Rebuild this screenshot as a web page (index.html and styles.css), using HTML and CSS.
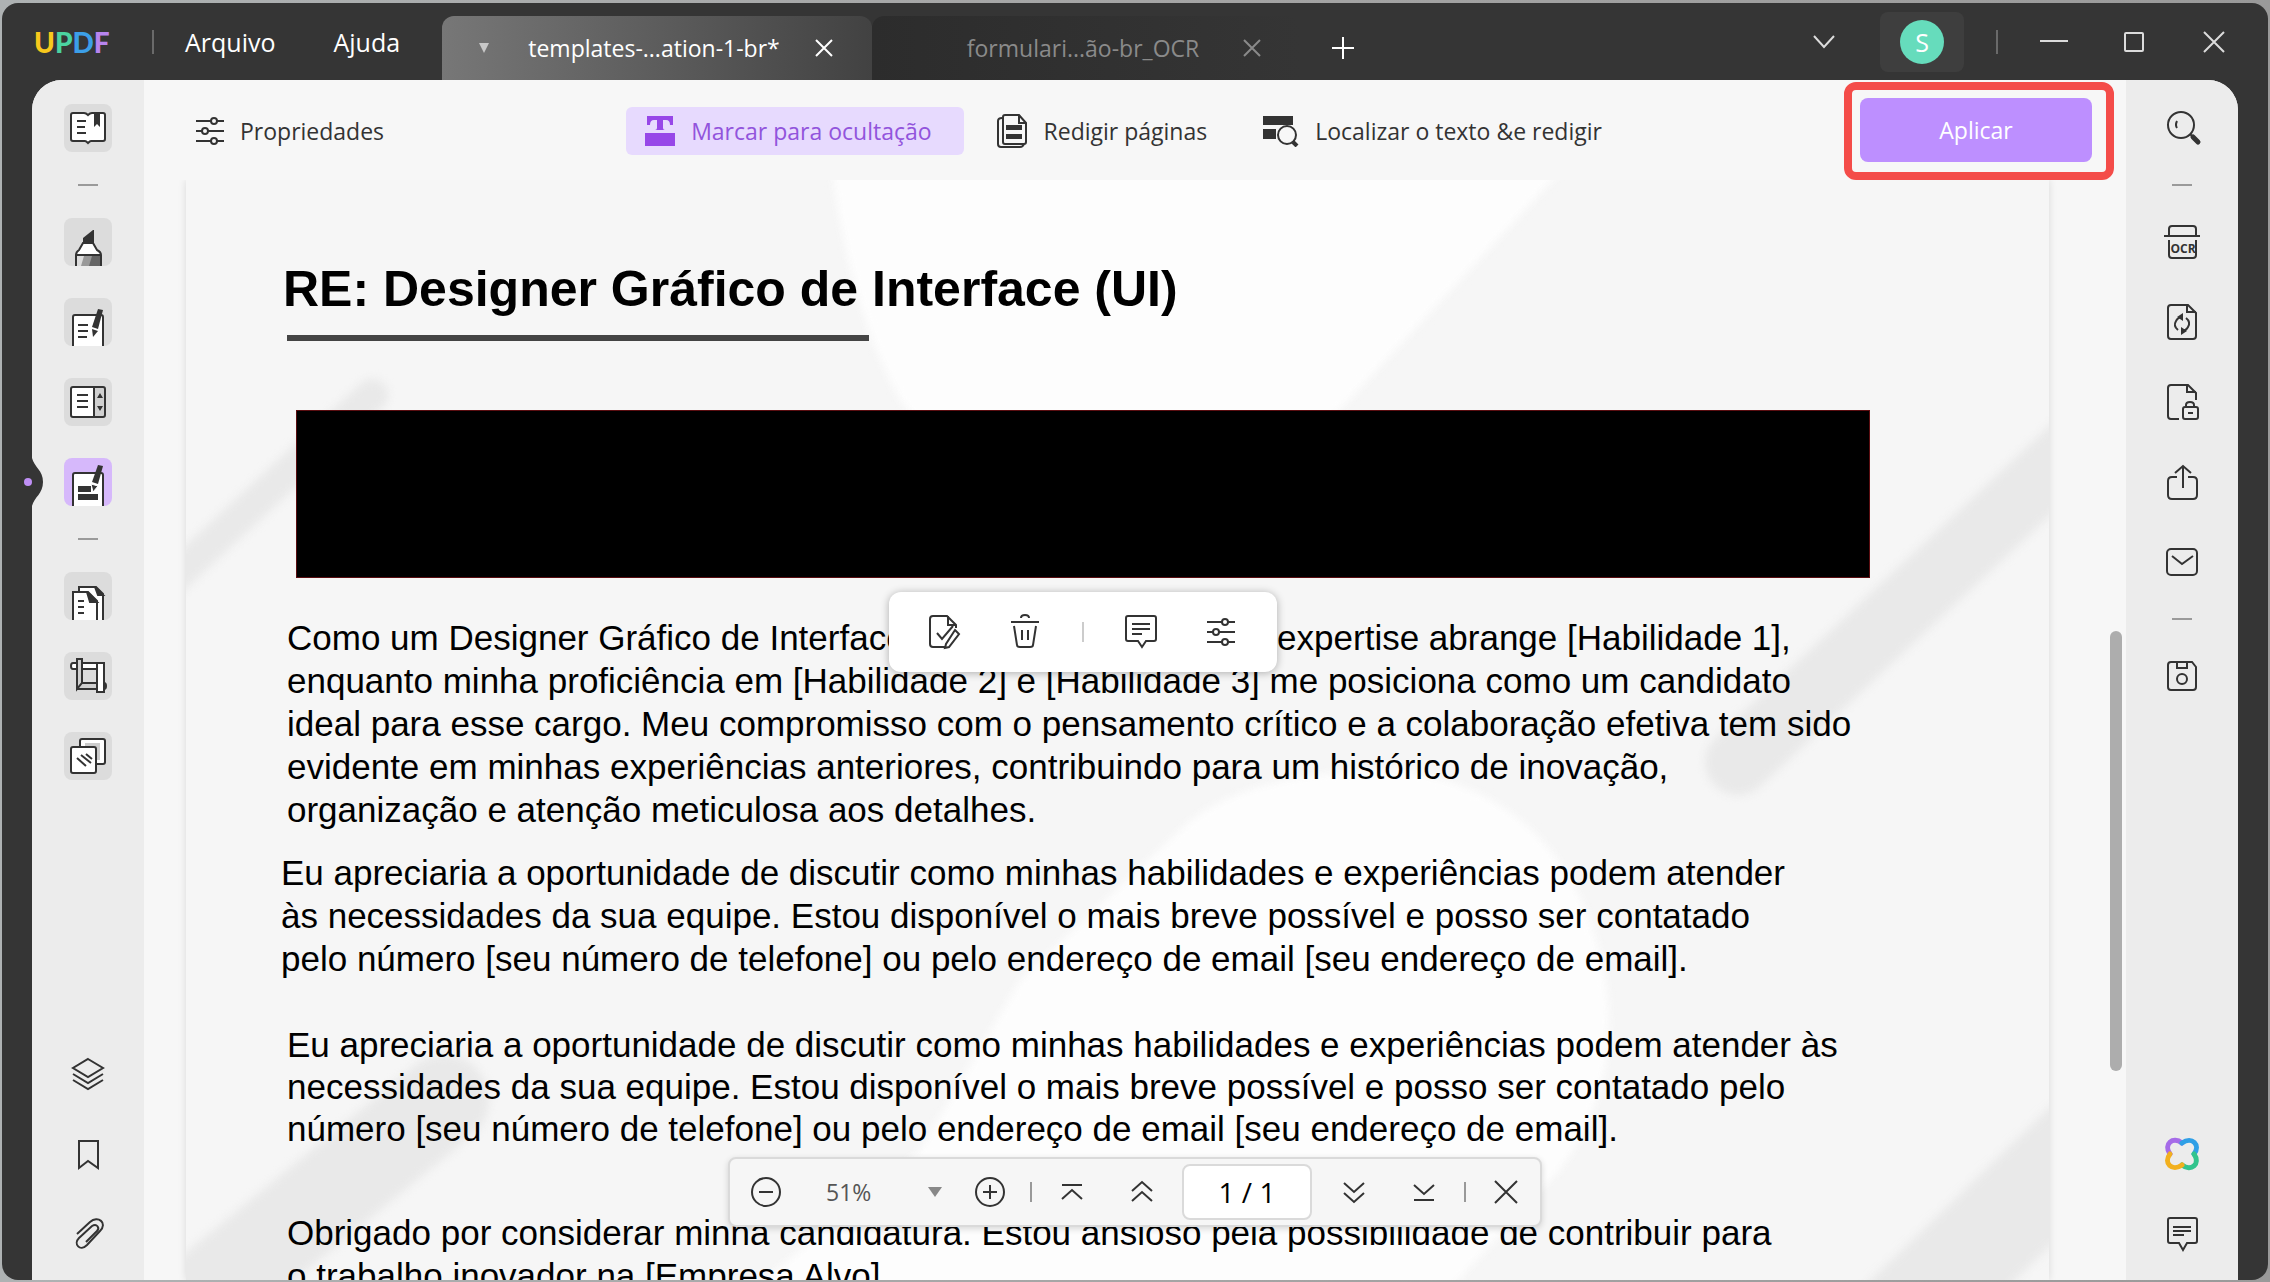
FILE: index.html
```html
<!DOCTYPE html>
<html lang="pt-BR">
<head>
    <meta charset="UTF-8">
    <meta name="viewport" content="width=device-width, initial-scale=1.0">
    <title>UPDF</title>
    <link rel="stylesheet" href="styles.css">
</head>
<body>
    <div class="window">
        <!-- Title bar -->
        <header class="titlebar">
            <div class="logo"><span class="logo-u">U</span><span class="logo-p">P</span><span class="logo-d">D</span><span class="logo-f">F</span></div>
            <span class="bar-divider"></span>
            <nav class="menu">
                <button class="menu-btn">Arquivo</button>
                <button class="menu-btn">Ajuda</button>
            </nav>
            <div class="tabs">
                <div class="tab tab-active">
                    <button class="tab-icon" aria-label="Opções da guia"><svg class="solid" width="12" height="10" viewBox="0 0 12 10"><path d="M1 0h10L6 10z"/></svg></button>
                    <button class="tab-label">templates-...ation-1-br*</button>
                    <button class="tab-icon" aria-label="Fechar guia"><svg width="18" height="18" viewBox="0 0 18 18"><path d="M1 1l16 16M17 1L1 17"/></svg></button>
                </div>
                <div class="tab">
                    <span class="tab-icon"></span>
                    <button class="tab-label">formulari...ão-br_OCR</button>
                    <button class="tab-icon" aria-label="Fechar guia"><svg width="18" height="18" viewBox="0 0 18 18"><path d="M1 1l16 16M17 1L1 17"/></svg></button>
                </div>
                <button class="tab-add" aria-label="Nova guia"><svg width="24" height="24" viewBox="0 0 24 24"><path d="M12 1v22M1 12h22"/></svg></button>
            </div>
            <div class="controls">
                <button class="control" aria-label="Lista de guias"><svg width="22" height="14" viewBox="0 0 22 14"><path d="M1 1l10 11L21 1"/></svg></button>
                <button class="account" aria-label="Conta"><span class="avatar">S</span></button>
                <span class="bar-divider"></span>
                <button class="control" aria-label="Minimizar"><svg width="28" height="20" viewBox="0 0 28 20"><path d="M0 9h28"/></svg></button>
                <button class="control" aria-label="Maximizar"><svg width="20" height="20" viewBox="0 0 20 20"><rect x="1" y="1" width="18" height="18" rx="1"/></svg></button>
                <button class="control" aria-label="Fechar"><svg width="22" height="22" viewBox="0 0 22 22"><path d="M1 1l20 20M21 1L1 21"/></svg></button>
            </div>
        </header>

        <div class="workspace">
            <!-- Left rail -->
            <aside class="rail rail-left">
                <svg class="notch" width="22" height="48" viewBox="0 0 22 48"><path d="M0 0h11c2 9 11 12 11 24s-9 15-11 24H0z" fill="#353535" stroke="none"/><circle cx="7" cy="24" r="4" fill="#bf8ff5" stroke="none"/></svg>
                <button class="tool tile" aria-label="Leitor"><svg width="48" height="48" viewBox="0 0 48 48">
                    <path d="M9 9h11q2 0 4 2 2-2 4-2h11q2 0 2 2v24q0 2-2 2H27q-1 0-3 2-2-2-3-2H9q-2 0-2-2V11q0-2 2-2z" fill="#fff"/><path d="M13 17h9M13 23h8M13 29h9"/><path d="M30 8h6v15l-3-3-3 3z" fill="#333" stroke="none"/></svg></button>
                <span class="dash"></span>
                <button class="tool tile" aria-label="Comentário"><svg width="48" height="48" viewBox="0 0 48 48">
                    <path d="M12 49V37q0-3 3-5l4-7h10l4 7q4 2 4 5v12z" fill="#fff"/><path d="M13 38h23v10H13z" fill="#999" stroke="none"/><path d="M13 38h7l-3 10h-4z" fill="#ddd" stroke="none"/><path d="M28 38h8v10H25z" fill="#666" stroke="none"/><path d="M12 37h25"/><path d="M19 25v-5l10-8h1v13z" fill="#333" stroke="none"/></svg></button>
                <button class="tool tile" aria-label="Editar"><svg width="48" height="48" viewBox="0 0 48 48">
                    <path d="M9 49V19q0-2 2-2h26q2 0 2 2v30z" fill="#fff"/><path d="M14 27h10M14 33h10M14 39h9"/><path d="M34 11l5 1-5 19-6-2z" fill="#333" stroke="none"/><path d="M28 31l6 2-5 6z" fill="#333" stroke="none"/></svg></button>
                <button class="tool tile" aria-label="Formulário"><svg width="48" height="48" viewBox="0 0 48 48">
                    <path d="M30 9h9q2 0 2 2v26q0 2-2 2h-9z" fill="#d0d0d0"/><path d="M30 9H9q-2 0-2 2v26q0 2 2 2h21z" fill="#fff"/><path d="M13 17h11M13 23h11M13 29h11"/><path d="M33 20l3-5 3 5zM33 28h6l-3 5z" fill="#333" stroke="none"/></svg></button>
                <button class="tool tile tile-active" aria-label="Redigir"><svg width="48" height="48" viewBox="0 0 48 48">
                    <path d="M9 49V17q0-2 2-2h26q2 0 2 2v32z" fill="#fff"/><path d="M14 28h13v6H14zM14 36h20v6H14z" fill="#333" stroke="none"/><path d="M34 7l5 1-5 18-6-2z" fill="#333" stroke="none"/><path d="M27 26l7 2-5 6z" fill="#333" stroke="#fff" stroke-width="1"/></svg></button>
                <span class="dash"></span>
                <button class="tool tile" aria-label="Organizar páginas"><svg width="48" height="48" viewBox="0 0 48 48">
                    <path d="M15 49V15h17l7 7v27z" fill="#fff"/><path d="M31 15l8 8h-5z" fill="#333"/><path d="M9 49V20h15l9 9v20z" fill="#fff"/><path d="M23 20l10 10h-7z" fill="#333"/><path d="M14 29h6M14 35h6M14 41h6"/></svg></button>
                <button class="tool tile" aria-label="Recortar"><svg width="48" height="48" viewBox="0 0 48 48">
                    <path d="M9 11h31v6H9q-2 0-2-3t2-3z" fill="#fff"/><path d="M13 31h27q2 0 2 3t-2 3H13z" fill="#d0d0d0"/><path d="M33 11h7v29h-7z" fill="#fff"/><path d="M12 7h6v24l-5 6V7z" fill="#d0d0d0"/><path d="M18 17h15v14H18z" fill="#ddd"/></svg></button>
                <button class="tool tile" aria-label="Marca d'água"><svg width="48" height="48" viewBox="0 0 48 48">
                    <rect x="16" y="7" width="25" height="25" rx="2" fill="#fff"/><rect x="21" y="11" width="15" height="17" fill="#ccc" stroke="none"/><rect x="7" y="15" width="25" height="26" rx="2" fill="#fff"/><path d="M13 26l9 8M17 23l10 8M22 22l6 5"/></svg></button>
                <div class="rail-bottom">
                    <button class="tool" aria-label="Camadas"><svg width="48" height="48" viewBox="0 0 48 48"><path d="M24 9l15 9-15 9-15-9zM9 24l15 9 15-9M9 30l15 9 15-9"/></svg></button>
                    <button class="tool" aria-label="Marcadores"><svg width="48" height="48" viewBox="0 0 48 48"><path d="M15 11h19v27l-10-7-9 7z"/></svg></button>
                    <button class="tool" aria-label="Anexos"><svg width="48" height="48" viewBox="0 0 48 48"><path d="M13 24l13-12c8-7 18 1 10 9L23 35c-7 7-14-1-8-7l13-12c5-3 8 2 5 5L22 32"/></svg></button>
                </div>
            </aside>

            <main class="main">
                <div class="toolbar">
                    <button class="toolbar-btn"><svg width="28" height="28" viewBox="0 0 28 28"><path d="M0 4h15M21 4h7M0 14h6M12 14h16M0 24h15M21 24h7"/><circle cx="18" cy="4" r="3"/><circle cx="9" cy="14" r="3"/><circle cx="18" cy="24" r="3"/></svg>Propriedades</button>
                    <div class="toolbar-group">
                        <button class="toolbar-btn toolbar-btn-active"><svg width="30" height="30" viewBox="0 0 30 30"><path d="M2 0h26v9h-3q0-5-4-5h-3v8q0 2 2 2h-10q2 0 2-2V4H9Q5 4 5 9H2zM0 17h30v13H0z" fill="#9747e8" stroke="none"/></svg>Marcar para ocultação</button>
                        <button class="toolbar-btn"><svg width="32" height="36" viewBox="0 0 32 36"><path d="M6 5Q2 5 2 8v23q0 3 3 3h19q3 0 4-3"/><path d="M9 2h14l7 8v19q0 2-2 2H9q-2 0-2-2V4q0-2 2-2z"/><path d="M23 2v8h7"/><path d="M10 12h16v5H10zM10 21h16v5H10z" fill="#333" stroke="none"/></svg>Redigir páginas</button>
                        <button class="toolbar-btn"><svg width="36" height="32" viewBox="0 0 36 32"><path d="M0 1h30v9H0zM0 14h13v10H0z" fill="#333" stroke="none"/><circle cx="24" cy="20" r="9" fill="#f7f7f7"/><path d="M30 27l4 4" stroke-width="4"/></svg>Localizar o texto &amp;e redigir</button>
                    </div>
                    <div class="apply-frame"><button class="apply-btn">Aplicar</button></div>
                </div>

                <!-- Document -->
                <div class="viewer">
                    <article class="page">
                        <svg class="page-art" viewBox="186 180 1863 1102" preserveAspectRatio="xMidYMin slice">
                            <g fill="#fdfdfd" stroke="none">
                                <path d="M832 170H1562L1340 410Q1220 520 1080 500 960 480 900 400 850 310 832 170z"/>
                                <path d="M1180 830Q1240 770 1400 770 1540 790 1590 920 1640 1060 1560 1170L1440 1300H740L920 1150 1020 980z"/>
                            </g>
                            <g stroke="#e9e9e9" stroke-linecap="round">
                                <path d="M372 395L150 600" stroke-width="32"/>
                                <path d="M1738 762L2100 424" stroke-width="66"/>
                                <path d="M444 1100L150 1340" stroke-width="90"/>
                                <path d="M1860 1360L2140 1090" stroke-width="100"/>
                            </g>
                        </svg>
                        <h1>RE: Designer Gráfico de Interface (UI)</h1>
                        <hr class="title-rule">
                        <div class="redaction">
                            <div class="popup">
                                <button aria-label="Aplicar redação"><svg width="34" height="36" viewBox="0 0 34 36"><path d="M17 33H5q-3 0-3-3V5q0-3 3-3h14l9 9v3M20 2v9h8"/><path d="M9 19l5 6 11-13"/><path d="M27 16l4 4-10 13-4 1 1-4z"/></svg></button>
                                <button aria-label="Excluir"><svg width="30" height="36" viewBox="0 0 30 36"><path d="M1 8h28M11 4q0-3 4-3t4 3M4 12l3 19q0 2 3 2h10q3 0 3-2l3-19M12 16v10M18 16v10"/></svg></button>
                                <span class="popup-divider"></span>
                                <button aria-label="Nota"><svg width="32" height="36" viewBox="0 0 32 36"><path d="M3 2h26q2 0 2 2v21q0 2-2 2h-8l-4 6-4-6H3q-2 0-2-2V4q0-2 2-2zM7 10h18M7 15h18M7 20h10"/></svg></button>
                                <button aria-label="Propriedades da redação"><svg width="28" height="28" viewBox="0 0 28 28"><path d="M0 4h15M21 4h7M0 14h6M12 14h16M0 24h15M21 24h7"/><circle cx="18" cy="4" r="3"/><circle cx="9" cy="14" r="3"/><circle cx="18" cy="24" r="3"/></svg></button>
                            </div>
                        </div>
                        <p class="para-first">Como um Designer Gráfico de Interface de Usuário (UI), minha expertise abrange [Habilidade 1],<br>
                            enquanto minha proficiência em [Habilidade 2] e [Habilidade 3] me posiciona como um candidato<br>
                            ideal para esse cargo. Meu compromisso com o pensamento crítico e a colaboração efetiva tem sido<br>
                            evidente em minhas experiências anteriores, contribuindo para um histórico de inovação,<br>
                            organização e atenção meticulosa aos detalhes.</p>
                        <p class="para-contact">Eu apreciaria a oportunidade de discutir como minhas habilidades e experiências podem atender<br>
                            às necessidades da sua equipe. Estou disponível o mais breve possível e posso ser contatado<br>
                            pelo número [seu número de telefone] ou pelo endereço de email [seu endereço de email].</p>
                        <p class="para-tight">Eu apreciaria a oportunidade de discutir como minhas habilidades e experiências podem atender às<br>
                            necessidades da sua equipe. Estou disponível o mais breve possível e posso ser contatado pelo<br>
                            número [seu número de telefone] ou pelo endereço de email [seu endereço de email].</p>
                        <p class="para-last">Obrigado por considerar minha candidatura. Estou ansioso pela possibilidade de contribuir para<br>
                            o trabalho inovador na [Empresa Alvo].</p>
                    </article>
                    <div class="scrollbar"></div>
                </div>

                <!-- Page navigation -->
                <div class="pager">
                    <button aria-label="Reduzir"><svg width="32" height="32" viewBox="0 0 32 32"><circle cx="16" cy="16" r="14"/><path d="M9 16h14"/></svg></button>
                    <select class="zoom" aria-label="Zoom"><option>51%</option></select>
                    <svg class="zoom-arrow" width="14" height="12" viewBox="0 0 14 12"><path d="M0 1h14L7 11z" fill="#888" stroke="none"/></svg>
                    <button aria-label="Ampliar"><svg width="32" height="32" viewBox="0 0 32 32"><circle cx="16" cy="16" r="14"/><path d="M9 16h14M16 9v14"/></svg></button>
                    <span class="pager-divider"></span>
                    <button aria-label="Primeira página"><svg width="24" height="24" viewBox="0 0 24 24"><path d="M2 5h20M2 19l10-9 10 9"/></svg></button>
                    <button class="prev" aria-label="Página anterior"><svg width="24" height="24" viewBox="0 0 24 24"><path d="M2 11l10-9 10 9M2 21l10-9 10 9"/></svg></button>
                    <input class="page-input" type="text" value="1 / 1" aria-label="Página">
                    <button class="next" aria-label="Próxima página"><svg width="24" height="24" viewBox="0 0 24 24"><path d="M2 3l10 9 10-9M2 13l10 9 10-9"/></svg></button>
                    <button aria-label="Última página"><svg width="24" height="24" viewBox="0 0 24 24"><path d="M2 5l10 9 10-9M2 20h20"/></svg></button>
                    <span class="pager-divider"></span>
                    <button aria-label="Fechar barra"><svg width="26" height="26" viewBox="0 0 26 26"><path d="M2 2l22 22M24 2L2 24"/></svg></button>
                </div>
            </main>

            <!-- Right rail -->
            <aside class="rail rail-right">
                <button class="tool" aria-label="Pesquisar"><svg width="48" height="48" viewBox="0 0 48 48"><circle cx="23" cy="21" r="13"/><path d="M19 17q-2 4 0 7"/><path d="M32 30l3 3"/><path d="M35 33l5 5" stroke-width="5" stroke-linecap="round"/></svg></button>
                <span class="dash"></span>
                <button class="tool" aria-label="OCR"><svg width="48" height="48" viewBox="0 0 48 48"><path d="M11 18v-7q0-3 3-3h21q3 0 3 3v7M6 18h36M11 22v15q0 3 3 3h21q3 0 3-3V22"/><text class="ocr-text" x="25" y="35">OCR</text></svg></button>
                <button class="tool" aria-label="Converter"><svg width="48" height="48" viewBox="0 0 48 48"><path d="M13 7h17l8 8v23q0 3-3 3H13q-3 0-3-3V10q0-3 3-3zM29 7v7h9"/><path d="M20 32q-5-4-2-9 2-4 7-4M28 20q5 4 2 9-2 4-7 4"/><path d="M25 15v8l-6-4zM23 29v8l6-4z" fill="#333" stroke="none"/></svg></button>
                <button class="tool" aria-label="Proteger"><svg width="48" height="48" viewBox="0 0 48 48"><path d="M21 41h-8q-3 0-3-3V10q0-3 3-3h17l8 8v7M29 7v7h9"/><rect x="25" y="29" width="15" height="12" rx="2"/><path d="M28 29v-2q0-3 4-3t4 3v2M30 35h5"/></svg></button>
                <button class="tool" aria-label="Compartilhar"><svg width="48" height="48" viewBox="0 0 48 48"><path d="M19 19h-5q-4 0-4 4v14q0 4 4 4h21q4 0 4-4V23q0-4-4-4h-5M25 30V9M17 15l8-7 8 7"/></svg></button>
                <button class="tool" aria-label="E-mail"><svg width="48" height="48" viewBox="0 0 48 48"><rect x="9" y="11" width="30" height="26" rx="4"/><path d="M14 18l10 8 11-8"/></svg></button>
                <span class="dash"></span>
                <button class="tool" aria-label="Salvar"><svg width="48" height="48" viewBox="0 0 48 48"><path d="M13 10h21l4 5v20q0 3-3 3H13q-3 0-3-3V13q0-3 3-3zM19 10v6h10v-6"/><circle cx="24" cy="27" r="5"/></svg></button>
                <div class="rail-bottom">
                    <button class="tool" aria-label="UPDF AI"><svg width="48" height="48" viewBox="0 0 48 48"><g stroke-width="5" stroke-linecap="round"><path d="M12 24c-7-10 3-18 12-11" stroke="#a56be8"/><path d="M24 13c10-7 19 2 12 11" stroke="#2f9fe6"/><path d="M36 24c7 10-3 18-12 11" stroke="#32c48d"/><path d="M24 35c-10 7-19-2-12-11" stroke="#f2b01e"/></g></svg></button>
                    <button class="tool" aria-label="Comentários"><svg width="48" height="48" viewBox="0 0 48 48"><path d="M12 8h25q2 0 2 2v21q0 2-2 2h-8l-4 7-4-7h-9q-2 0-2-2V10q0-2 2-2zM15 17h18M15 21h18M15 25h11"/></svg></button>
                </div>
            </aside>
        </div>
    </div>
</body>
</html>
```
FILE: styles.css
```css
* {
    margin: 0;
    padding: 0;
    box-sizing: border-box;
}

body {
    height: 100vh;
    padding: 3px 2px 2px;
    background: linear-gradient(90deg, #aeb2b3, #a5a5a5 50%, #9a9a9a);
    font-family: "Open Sans", "Noto Sans", sans-serif;
    font-size: 23px;
    color: #333;
    overflow: hidden;
}

button, input, select {
    font: inherit;
    color: inherit;
    background: none;
    border: none;
    cursor: pointer;
}

button {
    display: flex;
    align-items: center;
    justify-content: center;
    white-space: nowrap;
}

svg {
    flex: none;
    fill: none;
    stroke: currentColor;
    stroke-width: 2;
}

.solid {
    fill: #c8c8c8;
    stroke: none;
}

.window {
    height: 100%;
    display: flex;
    flex-direction: column;
    background: #353535;
    border-radius: 16px;
    overflow: hidden;
}

/* Title bar */
.titlebar {
    height: 77px;
    flex: none;
    display: flex;
    align-items: center;
    padding-left: 32px;
    color: #fff;
}

.logo {
    width: 78px;
    font-family: Lato, sans-serif;
    font-size: 28px;
    font-weight: 900;
    line-height: 32px;
}

.logo-u { color: #f8c81c; }
.logo-p { color: #4bd3a0; }
.logo-d { color: #3c9fe8; }
.logo-f { color: #b884ee; }

.bar-divider {
    width: 2px;
    height: 24px;
    background: #6a6a6a;
}

.titlebar .logo + .bar-divider {
    margin: 0 31px 0 40px;
}

.menu {
    display: flex;
    gap: 58px;
    width: 257px;
    font-size: 25px;
}

.tabs {
    align-self: flex-end;
    display: flex;
    height: 64px;
}

.tab {
    width: 428px;
    display: flex;
    align-items: center;
    padding: 0 28px 0 22px;
    border-radius: 12px 12px 0 0;
    background: linear-gradient(90deg, #2c2c2c, #353535);
    color: #8a8a8a;
}

.tab-active {
    width: 430px;
    background: linear-gradient(90deg, #777, #424242);
    color: #fff;
}

.tab-icon {
    width: 40px;
    height: 40px;
}

.tab-label {
    flex: 1;
}

.tab-add {
    width: 86px;
}

.controls {
    display: flex;
    align-items: center;
    margin-left: auto;
    padding-right: 14px;
    color: #dcdcdc;
}

.control {
    width: 80px;
    height: 60px;
}

.account {
    width: 84px;
    height: 60px;
    margin: 0 32px 0 16px;
    border-radius: 8px;
    background: #3e3e3e;
}

.account + .bar-divider {
    margin-right: 16px;
}

.avatar {
    width: 44px;
    height: 44px;
    border-radius: 50%;
    background: #66dcbc;
    color: #fff;
    font-size: 25px;
    line-height: 44px;
}

/* Workspace */
.workspace {
    flex: 1;
    min-height: 0;
    display: flex;
    margin: 0 30px;
    background: #f7f7f7;
    border-radius: 30px 30px 0 0;
    position: relative;
}

.rail {
    width: 112px;
    flex: none;
    display: flex;
    flex-direction: column;
    align-items: center;
    gap: 32px;
    padding: 24px 0 22px;
    background: #ececec;
}

.rail-left {
    border-radius: 30px 0 0 0;
}

.rail-right {
    border-radius: 0 30px 0 0;
}

.rail-bottom {
    display: flex;
    flex-direction: column;
    gap: 32px;
    margin-top: auto;
}

.tool {
    width: 48px;
    height: 48px;
    border-radius: 8px;
    overflow: hidden;
}

.tile {
    background: #dcdcdc;
}

.tile-active {
    background: #d6b8fb;
}

.dash {
    width: 20px;
    height: 2px;
    background: #9a9a9a;
}

.notch {
    position: absolute;
    left: -11px;
    top: 378px;
}

.ocr-text {
    font-size: 12px;
    font-weight: 700;
    text-anchor: middle;
    fill: #333;
    stroke: none;
}

.main {
    flex: 1;
    min-width: 0;
    display: flex;
    flex-direction: column;
    position: relative;
}

.toolbar {
    height: 100px;
    flex: none;
    display: flex;
    align-items: center;
    justify-content: space-between;
    padding: 2px 12px 0 52px;
}

.toolbar-group {
    display: flex;
    gap: 8px;
}

.toolbar-btn {
    gap: 16px;
    height: 48px;
}

.toolbar-group .toolbar-btn {
    padding: 0 24px;
}

.toolbar-group .toolbar-btn:last-child {
    padding-right: 0;
}

.toolbar-group .toolbar-btn-active {
    background: #e7dafe;
    color: #9254dc;
    border-radius: 6px;
    padding: 0 32px 0 19px;
}

.apply-frame {
    padding: 8px 14px 10px 8px;
    border: 8px solid #f44c49;
    border-radius: 12px;
}

.apply-btn {
    width: 232px;
    height: 64px;
    background: #bd8fff;
    color: #fff;
    border-radius: 8px;
}

/* Document */
.viewer {
    flex: 1;
    min-height: 0;
    padding: 0 77px 0 42px;
    position: relative;
}

.page {
    height: 100%;
    padding: 79px 179px 0 101px;
    background: #f6f6f6;
    box-shadow: 0 0 8px rgba(0, 0, 0, 0.12);
    clip-path: inset(0 -8px);
    overflow: hidden;
    position: relative;
    font-family: "Liberation Sans", Arial, sans-serif;
    color: #000;
}

.page-art {
    position: absolute;
    inset: 0;
    width: 100%;
    height: 100%;
}

/* soft edges on the watermark shapes */
.page-art g {
    filter: blur(4px);
}

.page > :not(.page-art) {
    position: relative;
}

.page h1 {
    margin-left: -4px;
    font-size: 50px;
    line-height: 60px;
    white-space: nowrap;
}

.title-rule {
    width: 582px;
    height: 6px;
    margin-top: 16px;
    border: none;
    background: #444;
}

.redaction {
    height: 168px;
    margin: 69px 0 38px 9px;
    background: #000;
    border: 1px solid #5a0d10;
}

.page p {
    font-size: 35px;
    line-height: 43px;
    white-space: nowrap;
}

.page .para-contact {
    margin: 20px 0 44px -6px;
}

.page .para-tight {
    line-height: 42px;
    margin-bottom: 61px;
}

.popup {
    position: absolute;
    z-index: 2;
    top: 181px;
    left: 50%;
    transform: translateX(-50%);
    width: 388px;
    height: 80px;
    display: flex;
    align-items: center;
    padding: 0 16px;
    background: #fff;
    border-radius: 12px;
    box-shadow: 0 1px 8px rgba(0, 0, 0, 0.3);
    color: #333;
}

.popup button {
    width: 80px;
    height: 60px;
}

.popup-divider {
    width: 2px;
    height: 20px;
    margin: 0 17px;
    background: #ccc;
}

.scrollbar {
    position: absolute;
    right: 4px;
    top: 41%;
    width: 12px;
    height: 40%;
    border-radius: 6px;
    background: #adadad;
}

/* Page navigation */
.pager {
    position: absolute;
    left: 50%;
    bottom: 53px;
    transform: translateX(-50%);
    height: 70px;
    display: flex;
    align-items: center;
    padding: 0 16px 0 18px;
    background: #f6f6f6;
    border: 2px solid #dadada;
    border-radius: 8px;
    box-shadow: 0 2px 6px rgba(0, 0, 0, 0.15);
}

.pager button {
    width: 36px;
    height: 48px;
}

.pager .zoom {
    width: 52px;
    margin: 0 50px 0 42px;
    appearance: none;
    color: #555;
}

.zoom-arrow {
    margin-right: 30px;
}

.pager-divider {
    width: 2px;
    height: 20px;
    margin: 0 22px;
    background: #999;
}

.pager .prev {
    margin: 0 22px 0 34px;
}

.pager .next {
    margin: 0 34px 0 24px;
}

.page-input {
    width: 130px;
    height: 56px;
    background: #fff;
    border: 2px solid #dadada;
    border-radius: 8px;
    font-size: 28px;
    color: #000;
    text-align: center;
}
```
